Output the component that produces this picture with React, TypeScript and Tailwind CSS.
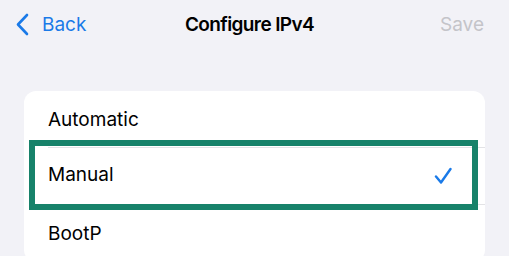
import { useState } from "react"

const options = ["Automatic", "Manual", "BootP"]

export default function App() {
  const [selected] = useState("Manual")

  return (
    <div className="w-[509px] h-[256px] overflow-hidden bg-[#f2f2f7] font-['Inter',sans-serif] text-black">
      {/* nav bar */}
      <div className="grid grid-cols-[1fr_auto_1fr] items-center h-12 pl-[15px] pr-[25px]">
        <div className="flex items-center gap-[13px] text-[#1a7ae8]">
          <svg width="14" height="23" viewBox="0 0 14 23" fill="none">
            <path d="M12 2 L3 11.5 L12 21" stroke="currentColor" strokeWidth="2.6" strokeLinecap="round" strokeLinejoin="round" />
          </svg>
          <span className="text-[19px] leading-none">Back</span>
        </div>
        <h1 className="text-[19px] font-semibold leading-none tracking-[-0.6px]">Configure IPv4</h1>
        <span className="justify-self-end text-[19px] leading-none text-[#c4c4c9]">Save</span>
      </div>

      <div className="mx-6 mt-[43px] bg-white rounded-xl">
        {options.map((opt, i) => (
          <div key={opt} className="relative h-[57px]">
            <div className={"flex items-center justify-between h-full ml-6 pr-[33px] " + (i < options.length - 1 ? "border-b border-[#e3e3e6]" : "")}>
              <span className={"text-[19px] leading-none " + (opt === "Manual" ? "-mt-[3px]" : "")}>{opt}</span>
              {selected === opt && (
                <svg width="18" height="18" viewBox="0 0 18 18" fill="none" className="text-[#1a7ae8]">
                  <path d="M2 9.5 L7 15.5 L16.5 2" stroke="currentColor" strokeWidth="2.4" strokeLinecap="round" strokeLinejoin="round" />
                </svg>
              )}
            </div>
            {selected === opt && (
              <div className="absolute top-[-8px] bottom-[-5px] left-[5px] right-[7px] border-[6px] border-[#17826a] pointer-events-none" />
            )}
          </div>
        ))}
      </div>
    </div>
  )
}
